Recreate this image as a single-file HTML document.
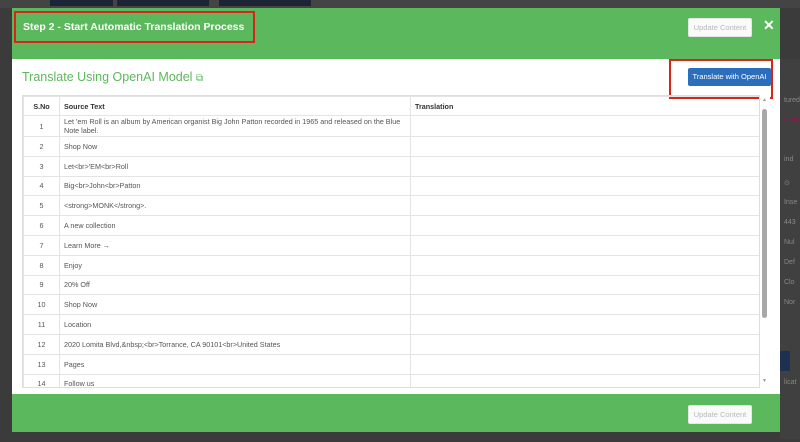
<!DOCTYPE html>
<html><head><style>
*{margin:0;padding:0;box-sizing:border-box}
body{width:800px;height:442px;background:#3b3b3b;font-family:"Liberation Sans",sans-serif;position:relative;overflow:hidden}
.topbar{position:absolute;top:0;left:0;width:800px;height:8px;background:#444}
.tb{position:absolute;top:0;height:6px;background:#1d2436}
.side{position:absolute;left:780px;top:59px;width:20px;height:380px;background:#404040;color:#888;font-size:7px;white-space:nowrap;overflow:hidden}
.side div{position:absolute;left:4px}
.modal{position:absolute;left:12px;top:8px;width:768px;height:424px;background:#fff}
.hdr{position:absolute;left:0;top:0;width:768px;height:51px;background:#5cb85c}
.ftr{position:absolute;left:0;top:386px;width:768px;height:38px;background:#5cb85c}
.title{position:absolute;left:2px;top:3px;width:241px;height:32px;border:2px solid #d9241c;color:#fff;font-weight:bold;font-size:10.5px;padding:8px 0 0 7px}
.upd{position:absolute;width:64px;height:19px;background:#fafafa;border:1px solid #e6e6e6;color:#b8b8b8;font-size:7.5px;text-align:center;line-height:17px;border-radius:2px}
.x{position:absolute;left:751px;top:9px;color:#fff;font-size:14px;font-weight:bold}
h2{position:absolute;left:10px;top:62px;color:#5cb85c;font-size:12.5px;font-weight:normal}
.redbox{position:absolute;left:657px;top:51px;width:104px;height:40px;border:2px solid #d9241c}
.btn{position:absolute;left:676px;top:60px;width:83px;height:18px;background:#2a6ebd;color:#fff;font-size:7.5px;text-align:center;line-height:18px;border-radius:2px}
.tw{position:absolute;left:10px;top:87px;width:738px;height:293px;overflow:hidden;border:1px solid #ddd}
table{border-collapse:collapse;width:738px;font-size:7.2px;color:#555;table-layout:fixed}
td,th{border:1px solid #e4e4e4;padding:0 4px;text-align:left;vertical-align:middle}
th{height:19px;font-weight:bold;color:#333}
td{height:19.8px}
td:first-child,th:first-child{text-align:center}
.sb{position:absolute;left:748px;top:87px;width:10px;height:293px;background:#fff}
.thumb{position:absolute;left:2px;top:14px;width:5px;height:209px;background:#a8a8a8;border-radius:3px}
</style></head><body>
<div class="topbar"></div>
<div class="tb" style="left:50px;width:63px"></div><div class="tb" style="left:117px;width:92px"></div><div class="tb" style="left:219px;width:92px"></div>
<div class="side"><div style="top:38px">tured</div><div style="top:58px;color:#b05">Elem</div><div style="top:97px">ind</div><div style="top:120px">⊙</div><div style="top:140px">Inse</div><div style="top:160px">443</div><div style="top:180px">Nul</div><div style="top:200px">Def</div><div style="top:220px">Clo</div><div style="top:240px">Nor</div><div style="top:292px;width:10px;height:20px;background:#1d3050;left:0"></div><div style="top:320px">licat</div></div>
<div class="modal">
<div class="hdr"></div>
<div class="title">Step 2 - Start Automatic Translation Process</div>
<div class="upd" style="left:676px;top:10px">Update Content</div>
<div class="x">✕</div>
<h2>Translate Using OpenAI Model <span style="font-size:10px">⧉</span></h2>
<div class="redbox"></div>
<div class="btn">Translate with OpenAI</div>
<div class="tw"><table>
<colgroup><col style="width:36px"><col style="width:351px"><col></colgroup>
<tr><th>S.No</th><th>Source Text</th><th>Translation</th></tr>
<tr><td style="height:21px">1</td><td style="line-height:9px">Let 'em Roll is an album by American organist Big John Patton recorded in 1965 and released on the Blue Note label.</td><td></td></tr>
<tr><td>2</td><td>Shop Now</td><td></td></tr>
<tr><td>3</td><td>Let&lt;br&gt;'EM&lt;br&gt;Roll</td><td></td></tr>
<tr><td>4</td><td>Big&lt;br&gt;John&lt;br&gt;Patton</td><td></td></tr>
<tr><td>5</td><td>&lt;strong&gt;MONK&lt;/strong&gt;.</td><td></td></tr>
<tr><td>6</td><td>A new collection</td><td></td></tr>
<tr><td>7</td><td>Learn More →</td><td></td></tr>
<tr><td>8</td><td>Enjoy</td><td></td></tr>
<tr><td>9</td><td>20% Off</td><td></td></tr>
<tr><td>10</td><td>Shop Now</td><td></td></tr>
<tr><td>11</td><td>Location</td><td></td></tr>
<tr><td>12</td><td>2020 Lomita Blvd,&amp;nbsp;&lt;br&gt;Torrance, CA 90101&lt;br&gt;United States</td><td></td></tr>
<tr><td>13</td><td>Pages</td><td></td></tr>
<tr><td>14</td><td>Follow us</td><td></td></tr>
<tr><td>15</td><td></td><td></td></tr>
</table></div>
<div class="sb"><div style="position:absolute;left:2px;top:2px;font-size:5px;color:#999">▲</div><div class="thumb"></div><div style="position:absolute;left:2px;top:283px;font-size:5px;color:#999">▼</div></div>
<div class="ftr"></div>
<div class="upd" style="left:676px;top:397px">Update Content</div>
</div>
</body></html>
